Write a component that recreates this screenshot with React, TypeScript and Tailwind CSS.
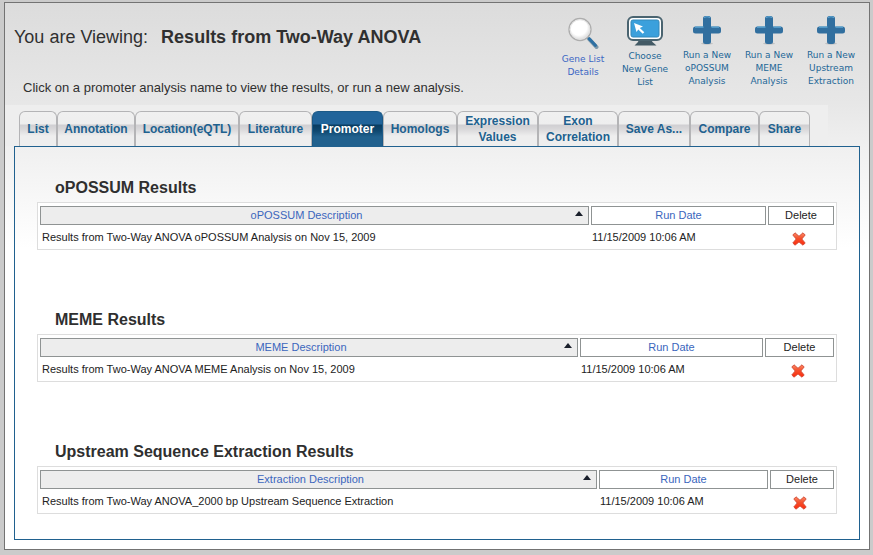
import React from "react";

type Tab = { label: string; width: string; active?: boolean };

const tabs: Tab[] = [
  { label: "List", width: "w-[38px]" },
  { label: "Annotation", width: "w-[78px]" },
  { label: "Location(eQTL)", width: "w-[104px]" },
  { label: "Literature", width: "w-[73px]" },
  { label: "Promoter", width: "w-[71px]", active: true },
  { label: "Homologs", width: "w-[74px]" },
  { label: "Expression Values", width: "w-[81px]" },
  { label: "Exon Correlation", width: "w-[80px]" },
  { label: "Save As...", width: "w-[72px]" },
  { label: "Compare", width: "w-[69px]" },
  { label: "Share", width: "w-[51px]" },
];

type Result = {
  title: string;
  column: string;
  name: string;
  dateWidth: string;
  deleteWidth: string;
};

const results: Result[] = [
  {
    title: "oPOSSUM Results",
    column: "oPOSSUM Description",
    name: "Results from Two-Way ANOVA oPOSSUM Analysis on Nov 15, 2009",
    dateWidth: "w-[175px]",
    deleteWidth: "w-[66px]",
  },
  {
    title: "MEME Results",
    column: "MEME Description",
    name: "Results from Two-Way ANOVA MEME Analysis on Nov 15, 2009",
    dateWidth: "w-[183px]",
    deleteWidth: "w-[69px]",
  },
  {
    title: "Upstream Sequence Extraction Results",
    column: "Extraction Description",
    name: "Results from Two-Way ANOVA_2000 bp Upstream Sequence Extraction",
    dateWidth: "w-[169px]",
    deleteWidth: "w-[64px]",
  },
];

function LensIcon() {
  return (
    <svg width="32" height="32" viewBox="0 0 32 32" aria-hidden="true">
      <defs>
        <radialGradient id="lens" cx="0.45" cy="0.4" r="0.6">
          <stop offset="0.6" stopColor="#fff" />
          <stop offset="1" stopColor="#d4d4d4" />
        </radialGradient>
      </defs>
      <path d="M20.500 20.500L23 23" stroke="#9aa4aa" strokeWidth="3" />
      <path d="M22.500 22.500L29.500 30" stroke="#7d97a8" strokeWidth="4" strokeLinecap="round" />
      <path d="M22 21.500L28.500 28.500" stroke="#2d70a3" strokeWidth="3" strokeLinecap="round" />
      <circle cx="13" cy="12.500" r="11" fill="url(#lens)" stroke="#adadad" strokeWidth="1.300" />
      <circle cx="13" cy="12.500" r="9.800" fill="none" stroke="#e4e4e4" strokeWidth="1" />
    </svg>
  );
}

function MonitorIcon() {
  return (
    <svg width="36" height="30" viewBox="0 0 36 30" aria-hidden="true">
      <path d="M12 23h12l1.500 3 4 3.500H7.500l3.500-3.500z" fill="#435a65" />
      <rect x="1" y="1" width="34" height="23" rx="5" fill="#fff" stroke="#4a6470" strokeWidth="2" />
      <rect x="4" y="4" width="28" height="17" rx="2" fill="#3ba0dc" stroke="#3489ba" strokeWidth="1" />
      <path d="M7 7l9 3.500-3.200 1.500 4.500 4.200-1.600 1.600-4.400-4.400L9.500 16z" fill="#fff" />
    </svg>
  );
}

function PlusIcon() {
  return (
    <svg width="28" height="29" viewBox="0 0 28 29" aria-hidden="true">
      <ellipse cx="14" cy="27.500" rx="6" ry="1.200" fill="#c2c2c2" />
      <path
        d="M10 2.500Q10 0 12.500 0H15.500Q18 0 18 2.500V10.500H25.500Q28 10.500 28 13V15Q28 17.500 25.500 17.500H18V25.500Q18 28 15.500 28H12.500Q10 28 10 25.500V17.500H2.500Q0 17.500 0 15V13Q0 10.500 2.500 10.500H10Z"
        fill="#316f9f"
      />
      <path d="M11 1.500Q14 0 17 1.500M2 11.200H10.500M18.500 11.200H26" fill="none" stroke="#5fa9d6" strokeWidth="1.200" />
    </svg>
  );
}

function DeleteIcon() {
  return (
    <svg width="14" height="14" viewBox="0 0 14 14" aria-hidden="true">
      <defs>
        <linearGradient id="cross" x1="0" y1="0" x2="0" y2="1">
          <stop offset="0" stopColor="#ff8a66" />
          <stop offset="0.450" stopColor="#f4502c" />
          <stop offset="1" stopColor="#ff2a0c" />
        </linearGradient>
      </defs>
      <path
        d="M3 .8L7 4.300 11 .8 13.200 3 9.800 7 13.200 11 11 13.200 7 9.900 3 13.200.8 11 4.200 7 .8 3z"
        fill="url(#cross)"
        stroke="#cf4a35"
        strokeWidth="0.900"
        strokeLinejoin="round"
      />
    </svg>
  );
}

function Action({ icon, lines, className }: { icon: React.ReactNode; lines: string[]; className: string }) {
  return (
    <a
      href="#"
      className={
        "flex w-[62px] flex-col items-center gap-1 text-center font-['DejaVu_Sans',sans-serif] text-[9px] leading-[13px] whitespace-nowrap " +
        className
      }
    >
      {icon}
      <span>
        {lines.map((line) => (
          <span key={line} className="block">
            {line}
          </span>
        ))}
      </span>
    </a>
  );
}

function ResultTable({ result }: { result: Result }) {
  return (
    <section>
      <h2 className="mb-[3px] pl-[18px] text-[16px] leading-[22px] font-bold text-[#2f2f2f]">{result.title}</h2>
      <table className="w-full table-fixed border-separate border-spacing-x-[2px] border-spacing-y-[3px] border border-[#dddddd] bg-white text-[11px] leading-[17px]">
        <thead>
          <tr>
            <th scope="col" className="border border-[#8f9393] bg-[#ededed] p-0 font-normal">
              <button type="button" className="relative block w-full pr-4 text-center text-[#3b66bd]">
                {result.column}
                <svg className="absolute top-[4px] right-[5px]" width="8" height="5" viewBox="0 0 8 5" aria-hidden="true">
                  <path d="M0 5L4 0l4 5z" fill="#1a1f2b" />
                </svg>
              </button>
            </th>
            <th scope="col" className={"border border-[#8f9393] p-0 font-normal " + result.dateWidth}>
              <button type="button" className="block w-full text-center text-[#3b66bd]">
                Run Date
              </button>
            </th>
            <th scope="col" className={"border border-[#8f9393] p-0 font-normal text-[#222222] " + result.deleteWidth}>
              Delete
            </th>
          </tr>
        </thead>
        <tbody className="text-[#222222]">
          <tr>
            <td className="h-[18px] px-[2px] py-0 align-middle">{result.name}</td>
            <td className="px-px py-0 align-middle">11/15/2009 10:06 AM</td>
            <td className="py-0 pr-[4px] pl-0 align-middle">
              <button type="button" aria-label="Delete" className="mx-auto flex h-[18px] items-end">
                <DeleteIcon />
              </button>
            </td>
          </tr>
        </tbody>
      </table>
    </section>
  );
}

export default function App() {
  return (
    <div className="min-h-screen bg-[#cbcbcb] pt-[2px] pr-[3px] pb-[5px] pl-[4px] font-['Liberation_Sans',Arial,sans-serif]">
      <div className="border border-[#737373] bg-[linear-gradient(to_bottom,#dcdcdc_0px,#e7e7e7_100px,#f0f0f0_145px,#ffffff_245px)] pb-[9px]">
        <header className="flex h-[102px] justify-between pr-[7px] pl-[9px]">
          <div>
            <h1 className="pt-[22px] text-[18px] leading-[24px] font-normal whitespace-nowrap text-[#303030]">
              You are Viewing: <strong className="ml-[8px]">Results from Two-Way ANOVA</strong>
            </h1>
            <p className="mt-[30px] pl-[9px] text-[13px] leading-[18px] whitespace-nowrap text-[#303030]">
              Click on a promoter analysis name to view the results, or run a new analysis.
            </p>
          </div>
          <div className="flex pt-[13px]">
            <Action icon={<LensIcon />} lines={["Gene List", "Details"]} className="pt-[1px] text-[#3b66c4]" />
            <Action icon={<MonitorIcon />} lines={["Choose", "New Gene", "List"]} className="text-[#236797]" />
            <Action icon={<PlusIcon />} lines={["Run a New", "oPOSSUM", "Analysis"]} className="text-[#236797]" />
            <Action icon={<PlusIcon />} lines={["Run a New", "MEME", "Analysis"]} className="text-[#236797]" />
            <Action icon={<PlusIcon />} lines={["Run a New", "Upstream", "Extraction"]} className="text-[#236797]" />
          </div>
        </header>

        <nav className="mr-[41px] flex bg-[#eeeeee] pt-[6px] pl-[14px]">
          {tabs.map((tab) => (
            <a
              key={tab.label}
              href="#"
              aria-current={tab.active ? "page" : undefined}
              className={
                "flex h-[35px] shrink-0 items-center justify-center rounded-t-[6px] border border-b-0 pb-px text-center text-[12px] leading-[16px] font-bold " +
                tab.width +
                (tab.active
                  ? " border-[#1c5a87] bg-[linear-gradient(to_bottom,#21649a_0px,#21649a_12px,#093c61_13px,#0f4870_19px,#21618e_25px)] text-white"
                  : " border-[#b4b4b6] bg-[linear-gradient(to_bottom,#f0f0f0_0px,#eeeeee_12px,#d0cfd2_13px,#d8d7d9_17px,#eeeeee_24px)] text-[#20618f]")
              }
            >
              {tab.label}
            </a>
          ))}
        </nav>

        <main className="mx-[9px] flex flex-col gap-[59px] border border-[#20618f] px-[22px] pt-[30px] pb-[25px]">
          {results.map((result) => (
            <ResultTable key={result.title} result={result} />
          ))}
        </main>
      </div>
    </div>
  );
}
